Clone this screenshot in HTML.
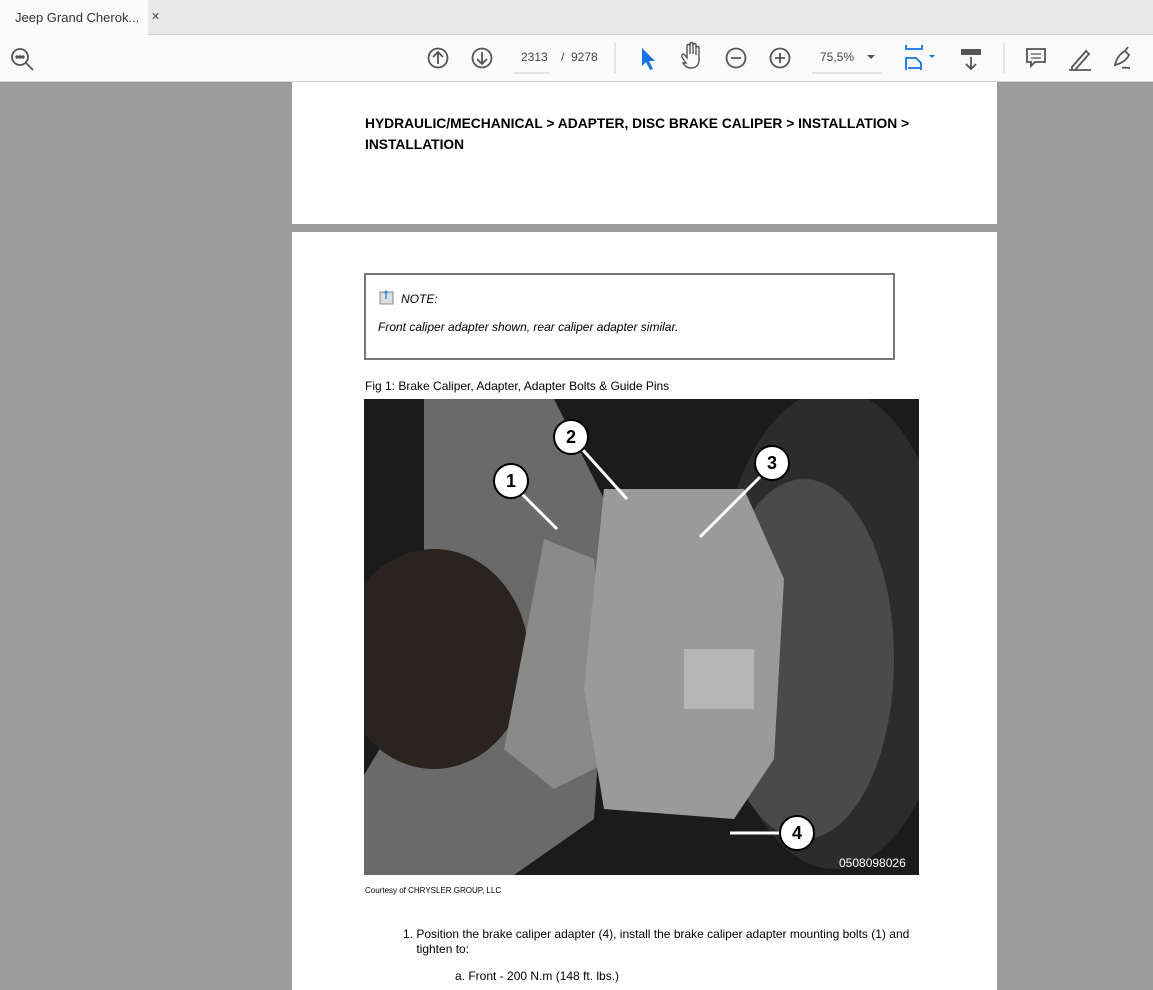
<!DOCTYPE html>
<html><head><meta charset="utf-8"><style>
*{margin:0;padding:0;box-sizing:border-box}
body{width:1153px;height:990px;overflow:hidden;background:#9c9c9c;font-family:"Liberation Sans",sans-serif;position:relative}
.tabbar{position:absolute;left:0;top:0;width:1153px;height:35px;background:#e9e9e9;border-bottom:1px solid #cfcfcf}
.tab{position:absolute;left:0;top:0;width:148px;height:36px;background:#fafafa;font-size:13px;color:#333;padding:10px 0 0 15px;white-space:nowrap}
.tab span{position:absolute;left:151px;top:10px;font-size:11px;color:#444}
.tool{position:absolute;left:0;top:35px;width:1153px;height:47px;background:#fafafa;border-bottom:1px solid #d4d4d4}
.a{position:absolute}
.page{position:absolute;background:#fff;left:292px;width:705px}
.t{position:absolute;font-size:12px;color:#000}
</style></head><body>
<div class="tabbar"><div class="tab">Jeep Grand Cherok...</div><span class="a" style="left:151px;top:10px;font-size:11px;color:#444">✕</span></div>
<div class="tool">
<svg class="a" style="left:0;top:0" width="1153" height="47" fill="none" stroke="#555" stroke-width="1.8">
<circle cx="20" cy="22" r="8"/><path d="M26 28l7 7"/><circle cx="17" cy="22" r=".8" fill="#555"/><circle cx="20" cy="22" r=".8" fill="#555"/><circle cx="23" cy="22" r=".8" fill="#555"/>
<circle cx="438" cy="23" r="9.5"/><path d="M438 29v-12M433 22l5-5 5 5"/>
<circle cx="482" cy="23" r="9.5"/><path d="M482 17v12M477 24l5 5 5-5"/>
<path d="M514 38h35" stroke="#ccc" stroke-width="1"/>
<path d="M615 8v30" stroke="#ccc" stroke-width="1"/>
<path d="M642 13l0 18 4-4 4 8 3-1-4-8 6 0z" fill="#1473e6" stroke="none"/>
<path d="M686 28c-3-4-6-8-3-9 2 0 3 3 4 4v-12c0-2 3-2 3 0v8-10c0-2 3-2 3 0v10-9c0-2 3-2 3 0v10-7c0-2 3-2 3 0v12c0 5-3 8-8 8-4 0-6-2-8-5z" stroke-width="1.4"/>
<circle cx="736" cy="23" r="9.5"/><path d="M731 23h10"/>
<circle cx="780" cy="23" r="9.5"/><path d="M775 23h10M780 18v10"/>
<path d="M812 38h70" stroke="#ccc" stroke-width="1"/>
<path d="M867 20l4 4 4-4z" fill="#555" stroke="none"/>
<path d="M906 10v4h16v-4M906 35v-12h10l5 5v7M908 33h12" stroke="#1473e6"/>
<path d="M929 20l3 3 3-3z" fill="#1473e6" stroke="none"/>
<rect x="961" y="14" width="20" height="6" fill="#555" stroke="none"/><path d="M971 22v12M966 29l5 5 5-5"/>
<path d="M1004 8v30" stroke="#ccc" stroke-width="1"/>
<path d="M1027 14h18v13h-10l-4 4v-4h-4z"/><path d="M1031 19h10M1031 23h10" stroke-width="1.2"/>
<path d="M1072 32l14-16 3 3-14 16h-3zM1069 35h22" />
<path d="M1115 30c2-8 6-12 10-14l4 4c-2 4-6 8-14 10zM1125 16l3-4M1122 33c3-1 5 0 8 0" />
</svg>
<div class="a" style="left:521px;top:15px;font-size:12px;color:#444">2313</div>
<div class="a" style="left:561px;top:15px;font-size:12px;color:#444">/&nbsp; 9278</div>
<div class="a" style="left:820px;top:15px;font-size:12px;color:#444">75,5%</div>
</div>
<div class="page" style="top:82px;height:142px">
<div class="t" style="left:73px;top:31px;font-weight:bold;font-size:13.8px;line-height:21px;width:570px">HYDRAULIC/MECHANICAL &gt; ADAPTER, DISC BRAKE CALIPER &gt; INSTALLATION &gt; INSTALLATION</div>
</div>
<div class="page" style="top:232px;height:758px">
<div class="a" style="left:72px;top:41px;width:531px;height:87px;border:2px solid #777"></div>
<svg class="a" style="left:87px;top:57px" width="16" height="16"><rect x="1" y="3" width="13" height="12" fill="#ddd" stroke="#888"/><path d="M7 10V2M5 4l2-2 2 2" stroke="#4a90d0" fill="none" stroke-width="1.5"/></svg>
<div class="t" style="left:109px;top:60px;font-style:italic">NOTE:</div>
<div class="t" style="left:86px;top:88px;font-style:italic">Front caliper adapter shown, rear caliper adapter similar.</div>
<div class="t" style="left:73px;top:147px">Fig 1: Brake Caliper, Adapter, Adapter Bolts &amp; Guide Pins</div>
<svg class="a" style="left:72px;top:167px" width="555" height="476">
<rect width="555" height="476" fill="#1b1b1b"/>
<ellipse cx="470" cy="230" rx="120" ry="240" fill="#2c2c2c"/>
<ellipse cx="440" cy="260" rx="90" ry="180" fill="#4a4a4a"/>
<path d="M60 0h130l60 120 -20 300 -80 56h-150v-100l60-100z" fill="#6a6a6a"/>
<ellipse cx="70" cy="260" rx="95" ry="110" fill="#2a2420"/>
<path d="M180 140l50 20 20 200 -60 30 -50-40z" fill="#8a8a8a"/>
<path d="M240 90h140l40 90 -10 180 -40 60 -130-10 -20-120z" fill="#9a9a9a"/>
<rect x="320" y="250" width="70" height="60" fill="#b5b5b5"/>
<path d="M158 95l35 35M218 50l45 50M396 78l-60 60M416 434h-50" stroke="#fff" stroke-width="3"/>
<circle cx="207" cy="38" r="17" fill="#fff" stroke="#000" stroke-width="2"/><text x="207" y="44" font-size="18" font-weight="bold" text-anchor="middle" font-family="Liberation Sans">2</text>
<circle cx="147" cy="82" r="17" fill="#fff" stroke="#000" stroke-width="2"/><text x="147" y="88" font-size="18" font-weight="bold" text-anchor="middle" font-family="Liberation Sans">1</text>
<circle cx="408" cy="64" r="17" fill="#fff" stroke="#000" stroke-width="2"/><text x="408" y="70" font-size="18" font-weight="bold" text-anchor="middle" font-family="Liberation Sans">3</text>
<circle cx="433" cy="434" r="17" fill="#fff" stroke="#000" stroke-width="2"/><text x="433" y="440" font-size="18" font-weight="bold" text-anchor="middle" font-family="Liberation Sans">4</text>
<text x="475" y="468" font-size="12" fill="#fff" font-family="Liberation Sans">0508098026</text>
</svg>
<div class="t" style="left:73px;top:654px;font-size:8px">Courtesy of CHRYSLER GROUP, LLC</div>
<div class="t" style="left:111px;top:695px;line-height:15px;width:520px">1. Position the brake caliper adapter (4), install the brake caliper adapter mounting bolts (1) and<br>&nbsp;&nbsp;&nbsp;&nbsp;tighten to:</div>
<div class="t" style="left:163px;top:737px">a. Front - 200 N.m (148 ft. lbs.)</div>
</div>
</body></html>
